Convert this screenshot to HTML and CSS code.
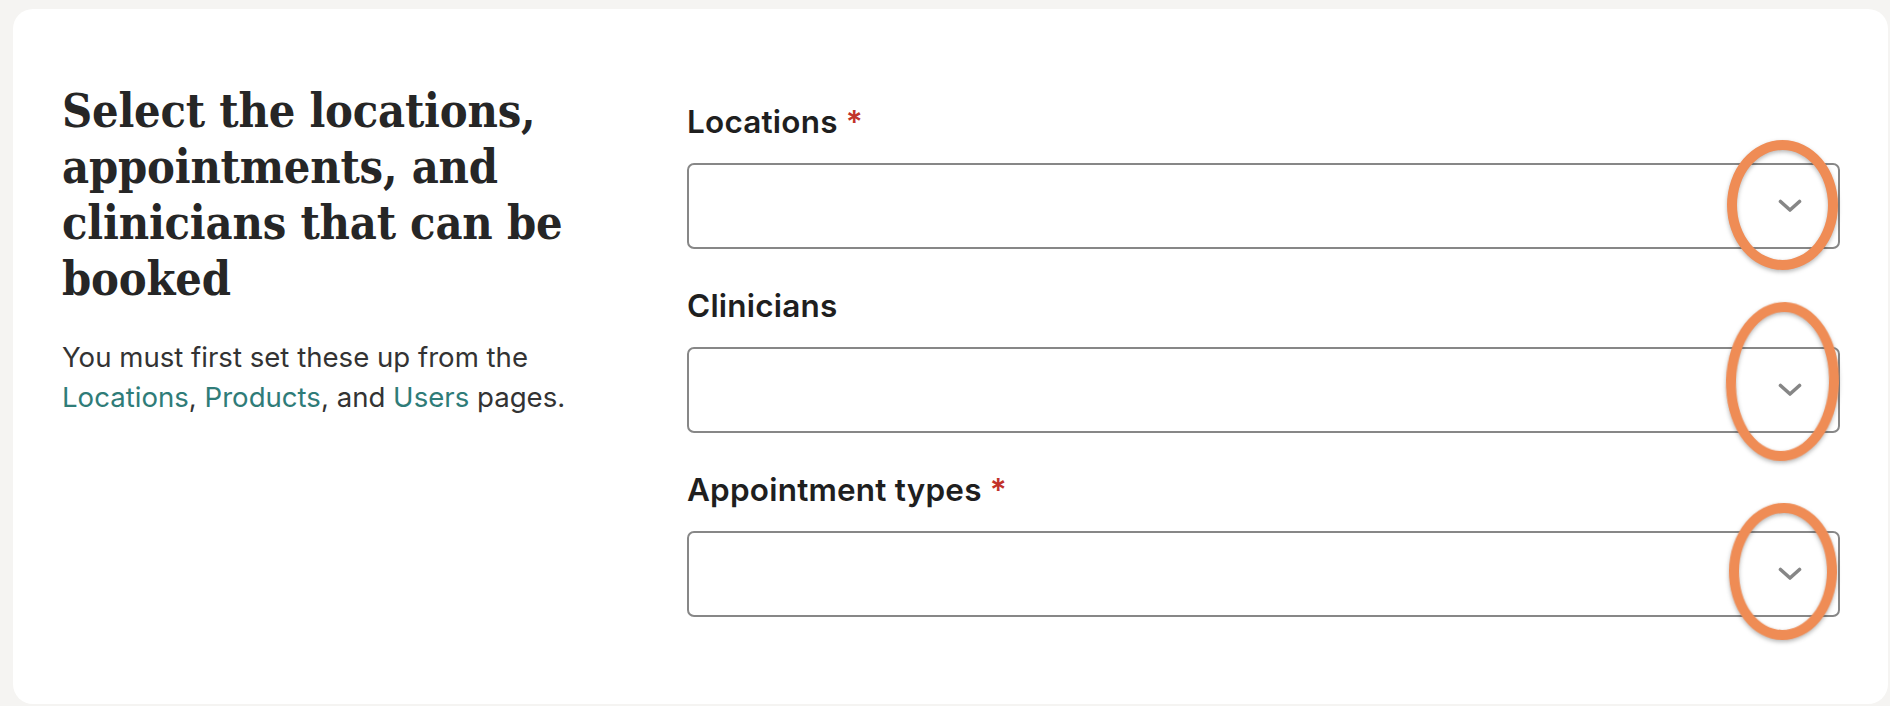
FILE: index.html
```html
<!DOCTYPE html>
<html lang="en">
<head>
<meta charset="utf-8">
<title>Booking settings</title>
<link rel="stylesheet" href="styles.css">
</head>
<body>
<div class="page">
  <section class="card">
    <div class="intro">
      <h2 class="title">Select the locations, appointments, and clinicians that can be booked</h2>
      <p class="desc">You must first set these up from the <a href="#" class="link">Locations</a>, <a href="#" class="link">Products</a>, and <a href="#" class="link">Users</a> pages.</p>
    </div>
    <div class="fields">
      <div class="field">
        <label class="label">Locations <span class="req">*</span></label>
        <div class="select">
          <svg class="chev" width="24" height="14" viewBox="0 0 24 14"><path d="M2.5 2.5 L12 11 L21.5 2.5" fill="none" stroke="#868686" stroke-width="3.6" stroke-linecap="round" stroke-linejoin="round"/></svg>
          <span class="mark mark-1"></span>
        </div>
      </div>
      <div class="field">
        <label class="label">Clinicians</label>
        <div class="select">
          <svg class="chev" width="24" height="14" viewBox="0 0 24 14"><path d="M2.5 2.5 L12 11 L21.5 2.5" fill="none" stroke="#868686" stroke-width="3.6" stroke-linecap="round" stroke-linejoin="round"/></svg>
          <span class="mark mark-2"></span>
        </div>
      </div>
      <div class="field">
        <label class="label">Appointment types <span class="req">*</span></label>
        <div class="select">
          <svg class="chev" width="24" height="14" viewBox="0 0 24 14"><path d="M2.5 2.5 L12 11 L21.5 2.5" fill="none" stroke="#868686" stroke-width="3.6" stroke-linecap="round" stroke-linejoin="round"/></svg>
          <span class="mark mark-3"></span>
        </div>
      </div>
    </div>
  </section>
</div>
</body>
</html>
```

FILE: styles.css
```css
* { box-sizing: border-box; }
html, body { margin: 0; padding: 0; }
body { background: #f5f4f2; }
.page {
  padding: 9px 2px 2px 13px;
  height: 706px;
}
.card {
  background: #ffffff;
  border-radius: 20px;
  height: 695px;
  padding: 74px 48px 0 49px;
  display: grid;
  grid-template-columns: 520px 1fr;
  column-gap: 105px;
  align-items: start;
}
.title {
  margin: 0;
  font-family: "DejaVu Serif", serif;
  font-stretch: condensed;
  font-weight: 700;
  font-size: 46.5px;
  line-height: 56px;
  color: #262626;
  letter-spacing: -0.2px;
}
.desc {
  margin: 30px 0 0;
  font-family: "Inter", "DejaVu Sans", sans-serif;
  font-size: 27.6px;
  line-height: 40px;
  color: #333333;
}
.link { color: #2f7c78; text-decoration: none; }
.fields {
  padding-top: 19px;
  display: flex;
  flex-direction: column;
  gap: 37px;
}
.field { display: flex; flex-direction: column; }
.label {
  font-family: "Inter", "DejaVu Sans", sans-serif;
  font-weight: 600;
  font-size: 31.5px;
  line-height: 40px;
  color: #1f1f1f;
  margin-bottom: 21px;
  letter-spacing: 0.2px;
}
.req { color: #c2322a; }
.select {
  position: relative;
  height: 86px;
  border: 2px solid #878787;
  border-radius: 7px;
  display: flex;
  align-items: center;
  justify-content: flex-end;
  padding-right: 36px;
}
.chev { display: block; }
.mark {
  position: absolute;
  border: 10px solid #ef8c55;
  border-radius: 50%;
  filter: drop-shadow(0 2px 2px rgba(0,0,0,0.28));
}
.mark-1 { top: -25px; right: 0px; width: 111px; height: 130px; }
.mark-2 { top: -47px; right: -1px; width: 113px; height: 159px; transform: rotate(2deg); }
.mark-3 { top: -30px; right: 1px; width: 108px; height: 137px; transform: rotate(1deg); }
```
